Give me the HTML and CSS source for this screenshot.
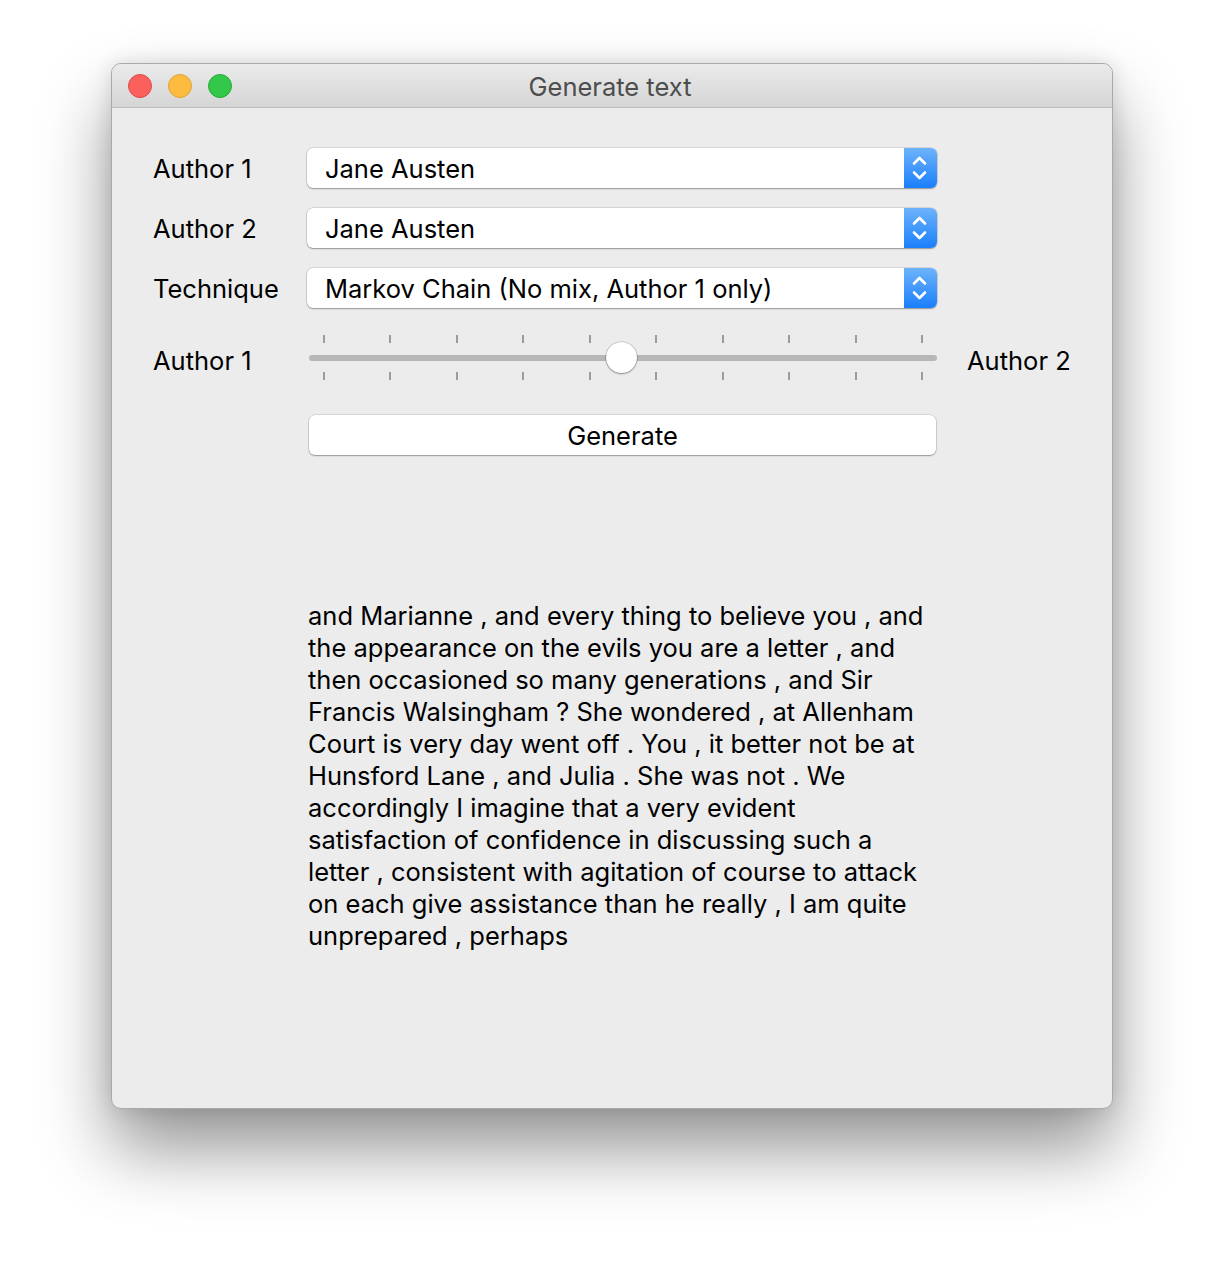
FILE: index.html
```html
<!DOCTYPE html>
<html>
<head>
<meta charset="utf-8">
<link rel="stylesheet" href="styles.css">
</head>
<body>
<div class="stage">
  <div class="window">
    <div class="titlebar">
      <div class="lights">
        <span class="light red"></span>
        <span class="light yellow"></span>
        <span class="light green"></span>
      </div>
      <div class="title">Generate text</div>
    </div>
    <div class="content">
      <div class="row">
        <div class="label">Author 1</div>
        <div class="popup">
          <span class="popup-text">Jane Austen</span>
          <span class="stepper"><svg width="33" height="40" viewBox="0 0 33 40"><polyline points="10,15.5 15.5,10 21,15.5" /><polyline points="10,24.5 15.5,30 21,24.5" /></svg></span>
        </div>
      </div>
      <div class="row">
        <div class="label">Author 2</div>
        <div class="popup">
          <span class="popup-text">Jane Austen</span>
          <span class="stepper"><svg width="33" height="40" viewBox="0 0 33 40"><polyline points="10,15.5 15.5,10 21,15.5" /><polyline points="10,24.5 15.5,30 21,24.5" /></svg></span>
        </div>
      </div>
      <div class="row">
        <div class="label">Technique</div>
        <div class="popup">
          <span class="popup-text">Markov Chain (No mix, Author 1 only)</span>
          <span class="stepper"><svg width="33" height="40" viewBox="0 0 33 40"><polyline points="10,15.5 15.5,10 21,15.5" /><polyline points="10,24.5 15.5,30 21,24.5" /></svg></span>
        </div>
      </div>
      <div class="row slider-row">
        <div class="label">Author 1</div>
        <div class="slider">
          <div class="ticks"><i></i><i></i><i></i><i></i><i></i><i></i><i></i><i></i><i></i><i></i></div>
          <div class="track"></div>
          <div class="ticks"><i></i><i></i><i></i><i></i><i></i><i></i><i></i><i></i><i></i><i></i></div>
          <div class="knob"></div>
        </div>
        <div class="label right">Author 2</div>
      </div>
      <div class="row button-row">
        <div class="label"></div>
        <button class="btn">Generate</button>
      </div>
      <p class="output">and Marianne , and every thing to believe you , and<br>the appearance on the evils you are a letter , and<br>then occasioned so many generations , and Sir<br>Francis Walsingham ? She wondered , at Allenham<br>Court is very day went off . You , it better not be at<br>Hunsford Lane , and Julia . She was not . We<br>accordingly I imagine that a very evident<br>satisfaction of confidence in discussing such a<br>letter , consistent with agitation of course to attack<br>on each give assistance than he really , I am quite<br>unprepared , perhaps</p>
    </div>
  </div>
</div>
</body>
</html>
```

FILE: styles.css
```css
* { box-sizing: border-box; }
html, body {
  margin: 0;
  padding: 0;
  background: #ffffff;
}
body {
  font-family: Inter, "Noto Sans", "Liberation Sans", sans-serif;
  color: #000;
  width: 1224px;
  height: 1268px;
  overflow: hidden;
}
.stage {
  padding: 63px 0 0 111px;
}
.window {
  width: 1002px;
  height: 1046px;
  background: #ececec;
  border-radius: 10px;
  border: 1px solid #a9a9a9;
  box-shadow: 0 40px 70px rgba(0, 0, 0, 0.42), 0 0 20px rgba(0, 0, 0, 0.12);
  overflow: hidden;
  display: flex;
  flex-direction: column;
}
.titlebar {
  height: 44px;
  flex: none;
  background: linear-gradient(#ebebeb, #d5d5d5);
  border-bottom: 1px solid #bcbcbc;
  display: flex;
  align-items: center;
  position: relative;
}
.lights {
  display: flex;
  gap: 16px;
  padding-left: 16px;
}
.light {
  width: 24px;
  height: 24px;
  border-radius: 50%;
  display: block;
}
.red { background: #fc605c; border: 1px solid #de4a46; }
.yellow { background: #fdbc40; border: 1px solid #dea236; }
.green { background: #34c84a; border: 1px solid #27aa35; }
.title {
  position: absolute;
  left: 0;
  right: 0;
  top: 1px;
  bottom: 0;
  display: flex;
  align-items: center;
  justify-content: center;
  font-size: 25.5px;
  color: #4d4d4d;
  padding-right: 4px;
}
.content {
  padding: 40px 0 0 41px;
  display: flex;
  flex-direction: column;
  gap: 20px;
}
.row {
  display: flex;
  align-items: center;
  height: 40px;
}
.label {
  width: 154px;
  flex: none;
  font-size: 25.5px;
}
.label.right {
  width: auto;
  margin-left: 30px;
}
.popup {
  width: 630px;
  height: 40px;
  background: #fff;
  border-radius: 6px;
  box-shadow: 0 0 0 0.5px rgba(0,0,0,0.18), 0 1px 1.5px rgba(0,0,0,0.3);
  display: flex;
  align-items: center;
  justify-content: space-between;
  overflow: hidden;
}
.popup-text {
  padding-left: 18px;
  font-size: 25.5px;
}
.stepper {
  width: 33px;
  height: 40px;
  background: linear-gradient(#6db3fb, #1a7ffb);
  display: block;
}
.stepper svg {
  display: block;
}
.stepper polyline {
  fill: none;
  stroke: #fff;
  stroke-width: 2.6;
  stroke-linecap: round;
  stroke-linejoin: round;
}
.slider-row {
  height: 60px;
}
.slider-row .label { padding-top: 4px; }
.slider {
  width: 628px;
  margin-left: 2px;
  height: 60px;
  position: relative;
  display: flex;
  flex-direction: column;
  justify-content: space-between;
  padding: 7px 0 8px;
}
.ticks {
  display: flex;
  justify-content: space-between;
  padding: 0 14px 0 14px;
}
.ticks i {
  display: block;
  width: 2px;
  height: 8px;
  background: #9c9c9c;
}
.track {
  height: 6px;
  background: #b7b7b7;
  border-radius: 3px;
}
.knob {
  position: absolute;
  left: 297px;
  top: 14px;
  width: 31px;
  height: 31px;
  border-radius: 50%;
  background: #fff;
  box-shadow: 0 0 0 0.5px rgba(0,0,0,0.25), 0 1px 2px rgba(0,0,0,0.35);
}
.button-row {
  margin-top: 7px;
}
.btn {
  width: 627px;
  height: 40px;
  margin-left: 2px;
  background: #fff;
  border: none;
  border-radius: 6px;
  box-shadow: 0 0 0 0.5px rgba(0,0,0,0.18), 0 1px 1.5px rgba(0,0,0,0.3);
  font-family: inherit;
  font-size: 25.5px;
  color: #000;
  padding: 0;
}
.output {
  margin: 125px 0 0 155px;
  font-size: 25.5px;
  line-height: 32px;
  white-space: nowrap;
}
```
